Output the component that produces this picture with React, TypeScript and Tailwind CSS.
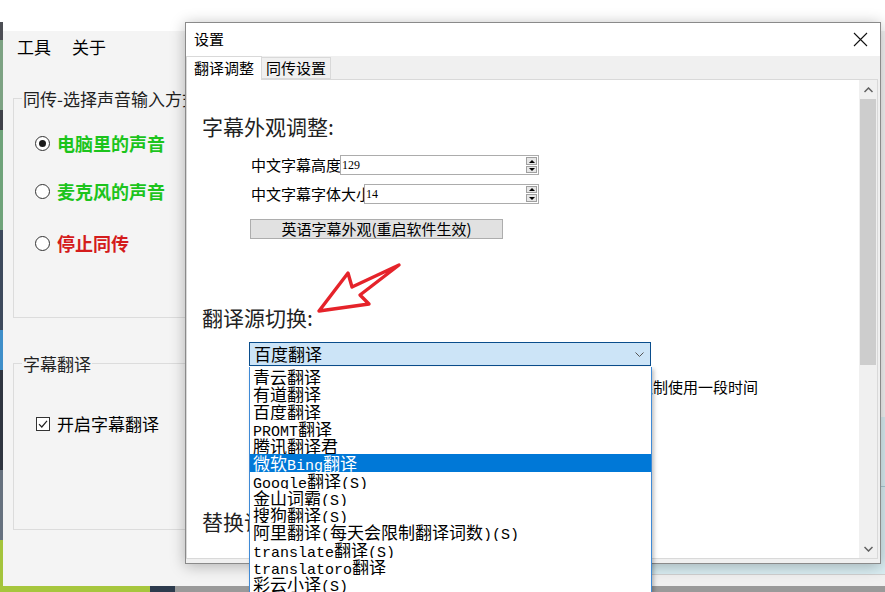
import React from 'react';

const sources = [
  '青云翻译',
  '有道翻译',
  '百度翻译',
  'PROMT翻译',
  '腾讯翻译君',
  '微软Bing翻译',
  'Google翻译(S)',
  '金山词霸(S)',
  '搜狗翻译(S)',
  '阿里翻译(每天会限制翻译词数)(S)',
  'translate翻译(S)',
  'translatoro翻译',
  '彩云小译(S)',
];

// SimSun-like mix: half width latin, full width hanzi
function Mixed({ text }: { text: string }) {
  const parts = text.match(/[\x20-\x7e]+|[^\x20-\x7e]+/g) ?? [];
  return (
    <>
      {parts.map((p, i) =>
        /[\x20-\x7e]/.test(p) ? (
          <span key={i} className="font-['Liberation_Mono',monospace] text-[15px]">
            {p}
          </span>
        ) : (
          <span key={i} className="text-[17px]">
            {p}
          </span>
        ),
      )}
    </>
  );
}

function Radio({ checked, label, color }: { checked?: boolean; label: string; color: string }) {
  return (
    <div className="flex h-[24px] items-center">
      <span className="flex h-[15px] w-[15px] items-center justify-center rounded-full border border-[#333] bg-white">
        {checked && <span className="h-[7px] w-[7px] rounded-full bg-[#1a1a1a]" />}
      </span>
      <span className={`ml-[7px] text-[18px] font-bold ${color}`}>{label}</span>
    </div>
  );
}

function SpinBox({ value, width }: { value: string; width: string }) {
  return (
    <div className={`flex h-[20px] ${width} border border-[#acacac] bg-white`}>
      <span className="flex-1 pl-[1px] font-['Liberation_Serif',serif] text-[12px] leading-[18px] text-black">
        {value}
      </span>
      <div className="flex w-[12px] flex-col gap-px py-px pr-px">
        <span className="flex flex-1 items-center justify-center border border-[#a0a0a0] bg-[#e6e6e6]">
          <span className="h-0 w-0 border-x-[3px] border-b-[3px] border-x-transparent border-b-black" />
        </span>
        <span className="flex flex-1 items-center justify-center border border-[#a0a0a0] bg-[#e6e6e6]">
          <span className="h-0 w-0 border-x-[3px] border-t-[3px] border-x-transparent border-t-black" />
        </span>
      </div>
    </div>
  );
}

export default function App() {
  return (
    <div className="relative h-[592px] w-[885px] overflow-hidden bg-white font-['Noto_Sans_CJK_SC',sans-serif] text-[#1a1a1a]">
      {/* desktop edge */}
      <div className="absolute left-0 top-0 h-[592px] w-[3px] bg-[linear-gradient(to_bottom,#ffffff_0px,#ffffff_22px,#4d4f55_22px,#4d4f55_40px,#7da283_40px,#7da283_110px,#3f4249_110px,#3f4249_130px,#6fa37a_130px,#6fa37a_230px,#3d4a5c_230px,#3d4a5c_330px,#3f8fc9_330px,#3f8fc9_370px,#2f3540_370px,#2f3540_470px,#67727f_470px,#67727f_540px,#a4c43c_540px)]" />

      {/* main window */}
      <div className="absolute left-[3px] top-0 flex h-[586px] w-[882px] flex-col bg-[#f4f4f4]">
        <div className="h-[31px] bg-white" />
        <div className="flex h-[32px] items-center gap-[21px] pl-[14px] text-[17px] text-black">
          <span>工具</span>
          <span>关于</span>
        </div>

        <div className="relative ml-[10px] mt-[35px] h-[220px] w-[400px] border border-[#dcdcdc] pl-[21px] pt-[32px]">
          <span className="absolute left-[8px] top-[-13px] bg-[#f4f4f4] px-[1px] text-[17px] text-[#222]">
            同传-选择声音输入方式
          </span>
          <Radio checked label="电脑里的声音" color="text-[#1cc41c]" />
          <div className="mt-[24px]">
            <Radio label="麦克风的声音" color="text-[#1cc41c]" />
          </div>
          <div className="mt-[28px]">
            <Radio label="停止同传" color="text-[#d41c1c]" />
          </div>
        </div>

        <div className="relative ml-[10px] mt-[45px] h-[167px] w-[400px] border border-[#dcdcdc] pl-[22px] pt-[48px]">
          <span className="absolute left-[8px] top-[-13px] bg-[#f4f4f4] px-[1px] text-[17px] text-[#222]">
            字幕翻译
          </span>
          <div className="flex h-[24px] items-center">
            <span className="flex h-[14px] w-[14px] items-center justify-center border border-[#333] bg-white">
              <svg width="10" height="10" viewBox="0 0 10 10">
                <path d="M1 5.2 L3.8 8 L9 1.8" fill="none" stroke="#222" strokeWidth="1.2" />
              </svg>
            </span>
            <span className="ml-[7px] text-[17px] text-black">开启字幕翻译</span>
          </div>
        </div>
      </div>

      {/* window behind, lower right */}
      <div className="absolute left-[420px] top-[417px] flex h-[170px] w-[465px] flex-col border-l border-[#b9c9cf] bg-[#daeef3]">
        <div className="h-[70px] border-b border-[#a9cad4]" />
        <div className="flex-1" />
        <div className="h-[13px] border-t border-[#d0d0d0] bg-[#f0f0f0]" />
      </div>

      {/* taskbar-ish bottom edge */}
      <div className="absolute left-0 top-[586px] flex h-[6px] w-[885px]">
        <div className="w-[150px] bg-[#a6c63d]" />
        <div className="w-[25px] bg-[#2d3b4d]" />
        <div className="flex-1 bg-[#9a9a9a]" />
      </div>

      {/* settings dialog */}
      <div className="absolute left-[185px] top-[22px] flex h-[542px] w-[696px] flex-col border border-[#8a8a8a] bg-[#f0f0f0] shadow-[0_2px_14px_rgba(0,0,0,0.28)]">
        <div className="flex h-[33px] items-center justify-between bg-white pl-[8px] pr-[12px]">
          <span className="text-[15px] text-black">设置</span>
          <svg width="15" height="15" viewBox="0 0 15 15">
            <path d="M1 1 L14 14 M14 1 L1 14" stroke="#111" strokeWidth="1.1" />
          </svg>
        </div>

        <div className="relative z-10 flex h-[24px] items-end">
          <div className="flex h-[24px] w-[76px] items-center border border-b-0 border-[#d9d9d9] bg-white pl-[7px] text-[15px] text-black">
            翻译调整
          </div>
          <div className="mb-px flex h-[22px] w-[69px] items-center border border-l-0 border-[#d9d9d9] bg-[#f0f0f0] pl-[4px] text-[15px] text-black">
            同传设置
          </div>
        </div>

        <div className="-mt-px mb-[4px] mr-[2px] flex flex-1 border border-[#d9d9d9] bg-white">
          <div className="flex-1 pl-[15px] pt-[32px]">
            <h2 className="text-[21px] leading-[28px] text-[#222]">字幕外观调整:</h2>

            <div className="ml-[49px] mt-[14px] flex items-center text-[15px] text-black">
              <span className="w-[89px] whitespace-nowrap">中文字幕高度</span>
              <SpinBox value="129" width="w-[199px]" />
            </div>
            <div className="ml-[49px] mt-[6px] flex items-center text-[15px] text-black">
              <span className="w-[113px] overflow-hidden whitespace-nowrap">中文字幕字体大小</span>
              <SpinBox value="14" width="w-[175px]" />
            </div>
            <div className="ml-[48px] mt-[14px] flex h-[20px] w-[253px] items-center justify-center border border-[#adadad] bg-[#e1e1e1] text-[15px] text-black">
              英语字幕外观(重启软件生效)
            </div>

            <h2 className="mt-[64px] text-[21px] leading-[28px] text-[#222]">翻译源切换:</h2>

            <div className="ml-[47px] mt-[11px] flex h-[24px] w-[402px] items-center justify-between border border-[#0a4d8c] bg-[#cce4f7] pl-[4px] pr-[6px] text-black">
              <span className="leading-[20px]">
                <Mixed text="百度翻译" />
              </span>
              <svg width="9" height="5" viewBox="0 0 9 5">
                <path d="M0.5 0.5 L4.5 4.5 L8.5 0.5" fill="none" stroke="#555" strokeWidth="1" />
              </svg>
            </div>

            <div className="ml-[47px] mt-[11px] flex h-[20px] items-center text-[15px] text-black">
              <span className="h-[13px] w-[13px] border border-[#333] bg-white" />
              <span className="ml-[1px] whitespace-nowrap">翻译出错时自动切换到下一个翻译源，并将出错的翻译源限制使用一段时间</span>
            </div>

            <h2 className="mt-[110px] text-[21px] leading-[28px] text-[#222]">替换词设置:</h2>
          </div>

          <div className="flex w-[18px] flex-col bg-[#f0f0f0]">
            <div className="flex h-[19px] items-center justify-center">
              <svg width="9" height="6" viewBox="0 0 9 6">
                <path d="M0.5 5 L4.5 1 L8.5 5" fill="none" stroke="#606060" strokeWidth="1.5" />
              </svg>
            </div>
            <div className="mx-px h-[266px] bg-[#cdcdcd]" />
            <div className="flex-1" />
            <div className="flex h-[19px] items-center justify-center">
              <svg width="9" height="6" viewBox="0 0 9 6">
                <path d="M0.5 1 L4.5 5 L8.5 1" fill="none" stroke="#606060" strokeWidth="1.5" />
              </svg>
            </div>
          </div>
        </div>
      </div>

      {/* annotation arrow */}
      <svg className="pointer-events-none absolute left-0 top-0" width="885" height="592">
        <polygon
          points="319,311 348,273 352,287 399,265 360,295 369,304"
          fill="none"
          stroke="#e5232a"
          strokeWidth="3.4"
          strokeLinejoin="round"
        />
      </svg>

      {/* open combobox list */}
      <div className="absolute left-[249px] top-[367px] w-[403px] border-x border-[#3f8ad6] bg-white pt-px text-black shadow-[2px_2px_4px_rgba(0,0,0,0.25)]">
        {sources.map((s) => (
          <div
            key={s}
            className={`h-[17.25px] overflow-hidden whitespace-nowrap pl-[3px] leading-[17.25px] ${
              s === '微软Bing翻译' ? 'bg-[#0078d7] text-white' : ''
            }`}
          >
            <Mixed text={s} />
          </div>
        ))}
      </div>
    </div>
  );
}
